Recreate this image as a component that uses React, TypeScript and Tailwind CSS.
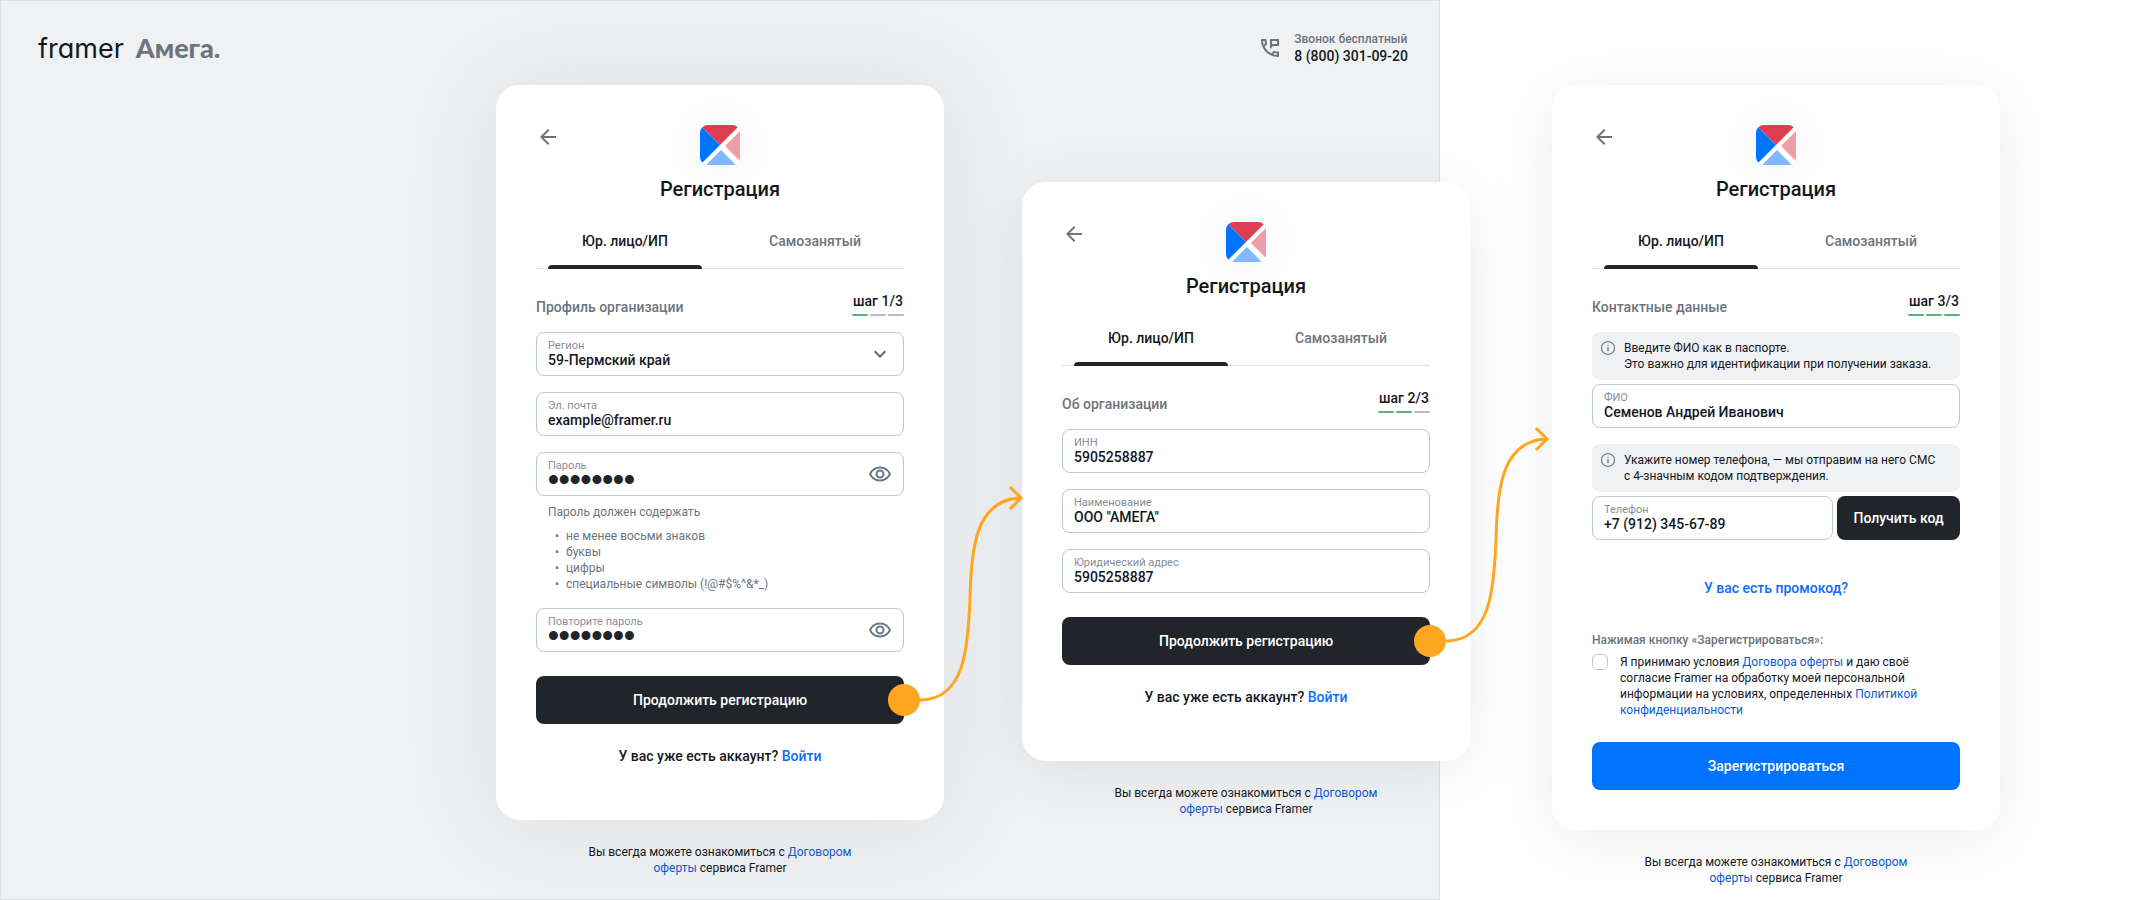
import { useId, useState, type ReactNode } from "react";
import {
  MdArrowBack,
  MdKeyboardArrowDown,
  MdOutlinePermPhoneMsg,
  MdOutlineRemoveRedEye,
} from "react-icons/md";

function BrandMark() {
  return (
    <svg viewBox="0 0 40 40" className="size-10 rounded-lg bg-white shadow-[0_0_48px_rgba(0,0,0,0.09)]" aria-hidden="true">
      <path d="M0 0H40L20 20Z" fill="#dc3d4f" />
      <path d="M0 0L20 20L0 40Z" fill="#0074ff" />
      <path d="M40 6V36L25 21Z" fill="#ee9ea7" />
      <path d="M6 40L21 25L36 40Z" fill="#80b9ff" />
    </svg>
  );
}

function InfoIcon() {
  return (
    <svg viewBox="0 0 16 16" className="size-4 shrink-0" fill="none" stroke="#6c757d" aria-hidden="true">
      <circle cx="8" cy="8" r="6.5" strokeWidth="1.1" />
      <path d="M8 7.2V11.3" strokeWidth="1.3" />
      <path d="M8 4.7V6" strokeWidth="1.3" />
    </svg>
  );
}

function Connector() {
  return (
    <svg
      viewBox="-16 -216 136 232"
      className="pointer-events-none absolute -right-[120px] bottom-2 h-[232px] w-[136px]"
      fill="none"
      stroke="#ffa621"
      strokeWidth="3"
      strokeLinecap="round"
      strokeLinejoin="round"
      aria-hidden="true"
    >
      <circle r="16" fill="#ffa621" stroke="none" />
      <path d="M14 0H18C60 -2 64 -50 66 -101C67 -150 71 -200 116 -202" />
      <path d="M107 -212L117 -202L107 -192" strokeLinecap="square" strokeLinejoin="miter" />
    </svg>
  );
}

function Header() {
  return (
    <header className="z-10 col-span-4 col-start-1 row-start-1 mr-[30px] flex items-start justify-between pt-[31px] pr-8 pl-[38px]">
      <div className="flex items-baseline gap-3 leading-[34px]">
        <span className="font-['Inter'] text-[27px] text-[#14181d] [font-feature-settings:'cv11']">framer</span>
        <span className="font-['Lato'] text-[27px] font-black text-[#6c757d]">Амега.</span>
      </div>
      <div className="flex items-start gap-3">
        <MdOutlinePermPhoneMsg className="mt-[5px] size-6 text-[#6c757d]" />
        <div>
          <p className="text-xs leading-4 font-medium text-[#6c757d]">Звонок бесплатный</p>
          <a href="tel:88003010920" className="block text-sm leading-[18px] font-medium">
            8 (800) 301-09-20
          </a>
        </div>
      </div>
    </header>
  );
}

function Tabs() {
  const [active, setActive] = useState(0);
  return (
    <div role="tablist" className="mt-5 flex gap-9 border-b border-[#dee2e6] px-3">
      {["Юр. лицо/ИП", "Самозанятый"].map((name, i) => (
        <button
          key={name}
          type="button"
          role="tab"
          aria-selected={i === active}
          onClick={() => setActive(i)}
          className={
            i === active
              ? "relative flex-1 pt-[10px] pb-[17px] text-sm leading-5 font-medium after:absolute after:inset-x-0 after:-bottom-px after:h-1 after:rounded-t after:bg-[#212529]"
              : "relative flex-1 pt-[10px] pb-[17px] text-sm leading-5 font-medium text-[#6c757d]"
          }
        >
          {name}
        </button>
      ))}
    </div>
  );
}

function StepHeading({ title, step }: { title: string; step: number }) {
  return (
    <div className="mt-6 mb-4 flex items-end justify-between">
      <h2 className="text-sm leading-[18px] font-medium text-[#6c757d]">{title}</h2>
      <div className="flex flex-col items-center">
        <p className="text-sm leading-4 font-medium">шаг {step}/3</p>
        <div className="mt-[5px] flex gap-0.5">
          {[1, 2, 3].map((n) => (
            <span key={n} className={n <= step ? "h-0.5 w-4 rounded-full bg-[#57b576]" : "h-0.5 w-4 rounded-full bg-[#b4bcc4]"} />
          ))}
        </div>
      </div>
    </div>
  );
}

type FieldProps = { label: string; value: string; type?: "text" | "email" | "tel" | "password" | "select"; className?: string };

function Field({ label, value, type = "text", className = "" }: FieldProps) {
  const id = useId();
  const [shown, setShown] = useState(false);
  const secret = type === "password" && !shown;
  const inputClass = secret
    ? "block h-4 w-full font-['Liberation_Sans'] text-[31px] font-bold leading-4 text-[#212529] outline-none"
    : "block h-4 w-full appearance-none bg-transparent text-sm leading-4 font-medium outline-none";
  return (
    <div className={`flex items-center rounded-lg border border-[#bcc8d0] bg-white py-[7px] px-[11px] ${className}`}>
      <div className="min-w-0 flex-1">
        <label htmlFor={id} className="block text-[11px] leading-3 text-[#868e96]">
          {label}
        </label>
        {type === "select" ? (
          <select id={id} defaultValue={value} className={inputClass}>
            <option>{value}</option>
          </select>
        ) : (
          <input id={id} type={secret ? "password" : type === "password" ? "text" : type} defaultValue={value} className={inputClass} />
        )}
      </div>
      {type === "select" && <MdKeyboardArrowDown className="pointer-events-none size-6 text-[#5c666f]" />}
      {type === "password" && (
        <button type="button" aria-label="Показать пароль" onClick={() => setShown(!shown)}>
          <MdOutlineRemoveRedEye className="size-6 text-[#6c757d]" />
        </button>
      )}
    </div>
  );
}

function Notice({ children }: { children: ReactNode }) {
  return (
    <div className="flex gap-2 rounded-lg bg-[#f0f1f3] p-2 text-xs leading-4">
      <InfoIcon />
      <p>{children}</p>
    </div>
  );
}

function NextButton() {
  return (
    <div className="relative mt-6">
      <button type="submit" className="h-12 w-full rounded-lg bg-[#212529] text-sm font-medium text-white">
        Продолжить регистрацию
      </button>
      <Connector />
    </div>
  );
}

function LoginHint() {
  return (
    <p className="mt-5 mb-3 text-center text-sm leading-6 font-medium">
      У вас уже есть аккаунт?{" "}
      <a href="#login" className="text-[#0a6cff]">
        Войти
      </a>
    </p>
  );
}

type StepCardProps = { title: string; step: number; className: string; shadow: string; children: ReactNode };

function StepCard({ title, step, className, shadow, children }: StepCardProps) {
  return (
    <section className={`relative row-start-2 self-start ${className}`}>
      <form className={`rounded-3xl bg-white p-10 ${shadow}`} onSubmit={(e) => e.preventDefault()}>
        <div className="grid grid-cols-[24px_1fr_24px] items-start justify-items-center">
          <button type="button" aria-label="Назад">
            <MdArrowBack className="size-6 text-[#6c757d]" />
          </button>
          <BrandMark />
        </div>
        <h1 className="mt-3 text-center text-xl leading-6 font-medium">Регистрация</h1>
        <Tabs />
        <StepHeading title={title} step={step} />
        {children}
      </form>
      <p className="mx-auto mt-6 max-w-[280px] text-center text-xs leading-4">
        Вы всегда можете ознакомиться с{" "}
        <a href="#offer" className="text-[#0a5bd0]">
          Договором оферты
        </a>{" "}
        сервиса Framer
      </p>
    </section>
  );
}

const passwordRules = ["не менее восьми знаков", "буквы", "цифры", "специальные символы (!@#$%^&*_)"];

export default function App() {
  const consentId = useId();
  return (
    <main className="grid min-h-screen grid-cols-[496fr_448px_78px_448px_82px_448px_132fr] grid-rows-[85px_1fr] overflow-hidden bg-white font-['Roboto',sans-serif] text-[#14181d]">
      <div className="col-span-4 col-start-1 row-span-2 row-start-1 mr-[30px] border border-[#dcdee1] bg-[#f0f1f3]" />
      <Header />

      <StepCard title="Профиль организации" step={1} className="z-20 col-start-2" shadow="shadow-[0_4px_100px_rgba(20,30,10,0.09)]">
        <div className="flex flex-col gap-4">
          <Field type="select" label="Регион" value="59-Пермский край" />
          <Field type="email" label="Эл. почта" value="example@framer.ru" />
          <Field type="password" label="Пароль" value="password" />
        </div>
        <div className="mt-2 mb-4 pl-3 text-xs leading-4 text-[#6c757d]">
          <p>Пароль должен содержать</p>
          <ul className="mt-2 pl-[7px]">
            {passwordRules.map((rule) => (
              <li key={rule} className="flex before:w-[11px] before:content-['•']">
                {rule}
              </li>
            ))}
          </ul>
        </div>
        <Field type="password" label="Повторите пароль" value="password" />
        <NextButton />
        <LoginHint />
      </StepCard>

      <StepCard title="Об организации" step={2} className="z-10 col-start-4 mt-[97px]" shadow="shadow-[0_10px_64px_rgba(0,0,0,0.08)]">
        <div className="flex flex-col gap-4">
          <Field label="ИНН" value="5905258887" />
          <Field label="Наименование" value={'ООО "АМЕГА"'} />
          <Field label="Юридический адрес" value="5905258887" />
        </div>
        <NextButton />
        <LoginHint />
      </StepCard>

      <StepCard title="Контактные данные" step={3} className="col-start-6" shadow="shadow-[0_10px_64px_rgba(0,0,0,0.08)]">
        <div className="flex flex-col gap-1">
          <Notice>
            Введите ФИО как в паспорте.
            <br />
            Это важно для идентификации при получении заказа.
          </Notice>
          <Field label="ФИО" value="Семенов Андрей Иванович" />
        </div>
        <div className="mt-4 flex flex-col gap-1">
          <Notice>
            Укажите номер телефона, — мы отправим на него СМС
            <br />с 4-значным кодом подтверждения.
          </Notice>
          <div className="flex gap-1">
            <Field type="tel" label="Телефон" value="+7 (912) 345-67-89" className="flex-1" />
            <button type="button" className="w-[123px] rounded-lg bg-[#212529] text-sm font-medium text-white">
              Получить код
            </button>
          </div>
        </div>
        <a href="#promo" className="mt-9 block text-center text-sm leading-6 font-medium text-[#0a6cff]">
          У вас есть промокод?
        </a>
        <p className="mt-8 mb-[6px] text-xs leading-4 font-medium text-[#6c757d]">Нажимая кнопку «Зарегистрироваться»:</p>
        <div className="flex items-start gap-3">
          <input id={consentId} type="checkbox" className="size-4 shrink-0 appearance-none rounded-[5px] border border-[#bcc8d0] bg-white checked:bg-[#0074ff]" />
          <label htmlFor={consentId} className="max-w-[316px] text-xs leading-4">
            Я принимаю условия{" "}
            <a href="#offer" className="text-[#0a5bd0]">
              Договора оферты
            </a>{" "}
            и даю своё согласие Framer на обработку моей персональной информации на условиях, определенных{" "}
            <a href="#privacy" className="text-[#0a5bd0]">
              Политикой конфиденциальности
            </a>
          </label>
        </div>
        <button type="submit" className="mt-6 h-12 w-full rounded-lg bg-[#0074ff] text-sm font-medium text-white">
          Зарегистрироваться
        </button>
      </StepCard>
    </main>
  );
}
